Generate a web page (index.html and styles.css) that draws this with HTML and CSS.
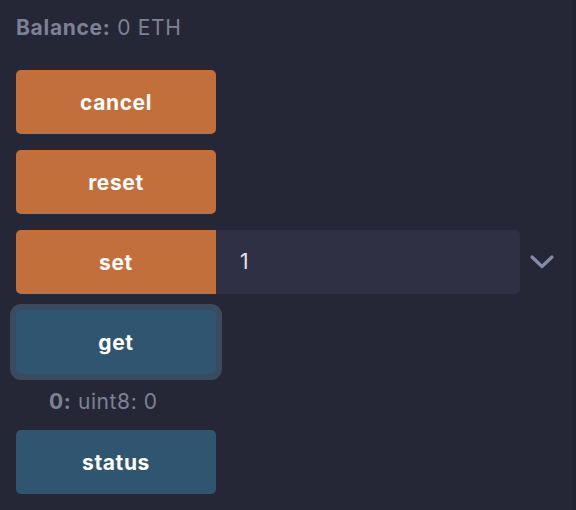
FILE: index.html
```html
<!DOCTYPE html>
<html>
<head>
<meta charset="utf-8">
<link rel="stylesheet" href="styles.css">
</head>
<body>
<div class="page">
  <div class="panel">
    <div class="balance"><b>Balance:</b> 0 ETH</div>
    <div class="actions">
      <button class="btn orange">cancel</button>
      <button class="btn orange">reset</button>
      <div class="row">
        <button class="btn orange">set</button>
        <div class="input">1</div>
        <svg class="chev" width="26" height="16" viewBox="0 0 26 16"><path d="M3 3 L13 12.5 L23 3" fill="none" stroke="#858aa8" stroke-width="3.2" stroke-linecap="round" stroke-linejoin="round"/></svg>
      </div>
      <button class="btn blue focus">get</button>
      <div class="output"><b>0:</b> uint8: 0</div>
      <button class="btn blue">status</button>
    </div>
  </div>
  <div class="edge"></div>
</div>
</body>
</html>
```
FILE: styles.css
```css
html, body {
  margin: 0;
  padding: 0;
  background: #252736;
  height: 100%;
}
body {
  font-family: Inter, "Noto Sans", sans-serif;
}
.page {
  display: flex;
  height: 510px;
  width: 576px;
}
.panel {
  flex: 1;
  padding: 16px 16px 0 16px;
}
.edge {
  width: 4px;
  background: #212331;
}
.balance {
  color: #7e8195;
  font-size: 21px;
  letter-spacing: 0.7px;
  line-height: 24px;
}
.balance b {
  font-weight: 700;
}
.actions {
  display: flex;
  flex-direction: column;
  gap: 16px;
  margin-top: 30px;
}
.btn {
  width: 200px;
  height: 64px;
  border: none;
  border-radius: 5px;
  color: #ffffff;
  font-family: Inter, "Noto Sans", sans-serif;
  font-size: 21px;
  letter-spacing: 0.6px;
  font-weight: 700;
  padding: 0;
  margin: 0;
  flex: none;
}
.orange { background: #c36f3b; }
.blue { background: #2f5571; }
.focus {
  box-shadow: 0 0 0 6px #3a4a5f;
}
.row {
  display: flex;
  align-items: center;
}
.row .btn {
  border-radius: 5px 0 0 5px;
}
.input {
  width: 304px;
  height: 64px;
  box-sizing: border-box;
  background: #2f3043;
  border-radius: 0 5px 5px 0;
  color: #e6e7ee;
  font-size: 21px;
  line-height: 64px;
  padding-left: 24px;
}
.chev {
  margin-left: 9px;
}
.output {
  color: #7e8195;
  font-size: 21px;
  letter-spacing: 0.6px;
  line-height: 24px;
  padding-left: 33px;
}
```
